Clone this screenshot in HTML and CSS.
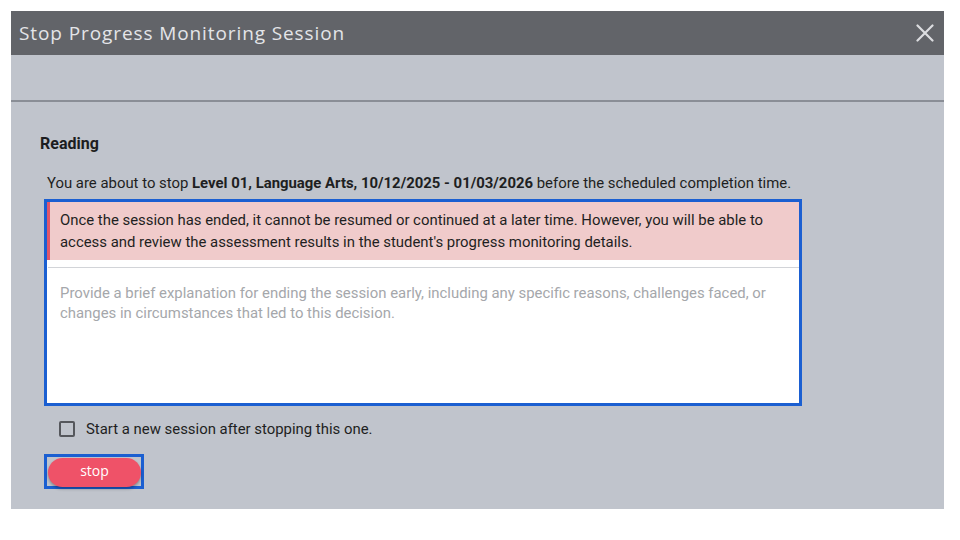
FILE: index.html
```html
<!DOCTYPE html>
<html>
<head>
<meta charset="utf-8">
<link rel="stylesheet" href="styles.css">
</head>
<body>
<div class="dialog">
  <header class="dlg-head">
    <h1 class="dlg-title">Stop Progress Monitoring Session</h1>
    <button class="close" aria-label="Close">
      <svg width="18" height="18" viewBox="0 0 18 18"><path d="M1.5 1.5 L16.5 16.5 M16.5 1.5 L1.5 16.5" stroke="#dcdde0" stroke-width="2.2" stroke-linecap="round"/></svg>
    </button>
  </header>
  <div class="toolbar"></div>
  <div class="content">
    <h2 class="subject">Reading</h2>
    <p class="intro">You are about to stop <b>Level 01, Language Arts, 10/12/2025 - 01/03/2026</b> before the scheduled completion time.</p>
    <div class="focus-box">
      <div class="alert">Once the session has ended, it cannot be resumed or continued at a later time. However, you will be able to access and review the assessment results in the student's progress monitoring details.</div>
      <textarea class="reason" placeholder="Provide a brief explanation for ending the session early, including any specific reasons, challenges faced, or changes in circumstances that led to this decision."></textarea>
    </div>
    <label class="check"><span class="box"></span><span>Start a new session after stopping this one.</span></label>
    <div class="actions"><span class="btn-focus"><button class="stop">stop</button></span></div>
  </div>
</div>
</body>
</html>
```
FILE: styles.css
```css
html, body { margin: 0; padding: 0; background: #ffffff; }
body { font-family: Roboto, "Liberation Sans", sans-serif; }
.dialog {
  margin: 11px 0 0 11px;
  width: 933px;
  height: 498px;
  background: #c0c4cc;
  display: flex;
  flex-direction: column;
}
.dlg-head {
  height: 44px;
  background: #626469;
  display: flex;
  align-items: center;
  justify-content: space-between;
  padding: 0 8px 0 8px;
}
.dlg-title {
  margin: 0;
  font-family: "Open Sans", "Liberation Sans", sans-serif;
  font-weight: 400;
  font-size: 19px;
  letter-spacing: 0.9px;
  color: #e4e5e8;
  line-height: 42px;
}
.close {
  background: none;
  border: 0;
  padding: 0;
  width: 18px;
  height: 18px;
  margin-right: 2px;
  display: flex;
}
.toolbar {
  height: 45px;
  border-bottom: 2px solid #8a8e96;
}
.content {
  padding: 32px 0 0 29px;
}
.subject {
  margin: 0;
  font-size: 16px;
  line-height: 19px;
  font-weight: 700;
  color: #1c1d20;
}
.intro {
  margin: 20px 0 0 7px;
  font-size: 14.9px;
  line-height: 20px;
  color: #1e1f22;
}
.intro b { font-weight: 700; }
.focus-box {
  margin: 6px 0 0 4px;
  width: 752px;
  border: 3px solid #1b5fd1;
  background: #ffffff;
  display: flex;
  flex-direction: column;
}
.alert {
  background: #f0cbcb;
  border-left: 3px solid #e0566a;
  padding: 7px 10px 7px 10px;
  font-size: 14.9px;
  line-height: 22px;
  color: #1e1f22;
  margin-bottom: 7px;
}
.reason {
  margin: 0 0 0 1px;
  height: 136px;
  box-sizing: border-box;
  border: 0;
  border-top: 1px solid #d2d4d8;
  padding: 15px 12px;
  font-family: Roboto, "Liberation Sans", sans-serif;
  font-size: 14.9px;
  line-height: 20px;
  resize: none;
  outline: none;
}
.reason::placeholder { color: #a5a7ab; }
.check {
  margin: 15px 0 0 19px;
  display: flex;
  align-items: center;
  gap: 11px;
  font-size: 14.9px;
  line-height: 16px;
  color: #1e1f22;
}
.box {
  width: 16px;
  height: 16px;
  box-sizing: border-box;
  border: 2px solid #55575c;
  border-radius: 2px;
}
.actions { margin: 17px 0 0 4px; display: flex; }
.btn-focus {
  border: 3px solid #1b5fd1;
  padding: 1px 0 0 1px;
  display: flex;
  height: 28px;
}
.stop {
  width: 93px;
  height: 29px;
  border: 0;
  border-radius: 15px;
  background: #ef5268;
  color: #ffffff;
  font-family: "Open Sans", "Liberation Sans", sans-serif;
  font-size: 14px;
  line-height: 26px;
  padding: 0 0 4px 0;
  box-shadow: 0 2px 3px rgba(0,0,0,0.3);
}
```
